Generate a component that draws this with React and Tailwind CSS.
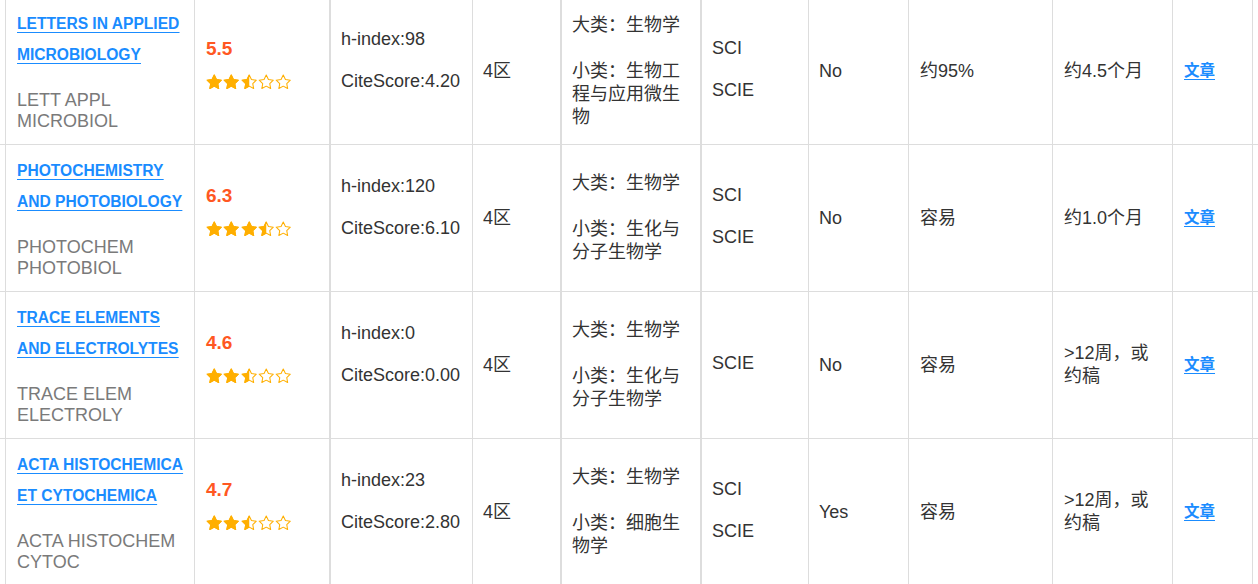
import { useId } from 'react';

const journals = [
  {
    title: ['LETTERS IN APPLIED', 'MICROBIOLOGY'],
    abbr: ['LETT APPL', 'MICROBIOL'],
    score: '5.5',
    stars: 2.5,
    hIndex: 98,
    citeScore: '4.20',
    zone: '4区',
    major: '大类：生物学',
    minor: ['小类：生物工', '程与应用微生', '物'],
    index: ['SCI', 'SCIE'],
    oa: 'No',
    rate: ['约95%'],
    speed: ['约4.5个月']
  },
  {
    title: ['PHOTOCHEMISTRY', 'AND PHOTOBIOLOGY'],
    abbr: ['PHOTOCHEM', 'PHOTOBIOL'],
    score: '6.3',
    stars: 3.5,
    hIndex: 120,
    citeScore: '6.10',
    zone: '4区',
    major: '大类：生物学',
    minor: ['小类：生化与', '分子生物学'],
    index: ['SCI', 'SCIE'],
    oa: 'No',
    rate: ['容易'],
    speed: ['约1.0个月']
  },
  {
    title: ['TRACE ELEMENTS', 'AND ELECTROLYTES'],
    abbr: ['TRACE ELEM', 'ELECTROLY'],
    score: '4.6',
    stars: 2.5,
    hIndex: 0,
    citeScore: '0.00',
    zone: '4区',
    major: '大类：生物学',
    minor: ['小类：生化与', '分子生物学'],
    index: ['SCIE'],
    oa: 'No',
    rate: ['容易'],
    speed: ['>12周，或', '约稿']
  },
  {
    title: ['ACTA HISTOCHEMICA', 'ET CYTOCHEMICA'],
    abbr: ['ACTA HISTOCHEM', 'CYTOC'],
    score: '4.7',
    stars: 2.5,
    hIndex: 23,
    citeScore: '2.80',
    zone: '4区',
    major: '大类：生物学',
    minor: ['小类：细胞生', '物学'],
    index: ['SCI', 'SCIE'],
    oa: 'Yes',
    rate: ['容易'],
    speed: ['>12周，或', '约稿']
  }
];

const STAR = 'M12 1.5l3.2 6.6 7.1.9-5.2 5 1.3 7.2L12 17.7l-6.4 3.5 1.3-7.2-5.2-5 7.1-.9z';

function Star({ fill }) {
  const id = useId();
  return (
    <svg viewBox="0 0 24 24" className="w-[16.5px] h-[16.5px] shrink-0">
      <defs>
        <clipPath id={id}>
          <rect x="0" y="0" width={fill === 'half' ? 12 : 24} height="24" />
        </clipPath>
      </defs>
      <path d={STAR} fill="none" stroke="#ffaf00" strokeWidth="1.5" strokeLinejoin="round" />
      {fill !== 'empty' ? <path d={STAR} fill="#ffaf00" stroke="#ffaf00" strokeWidth="1.5" strokeLinejoin="round" clipPath={`url(#${id})`} /> : null}
    </svg>
  );
}

function Stars({ value }) {
  const list = [0, 1, 2, 3, 4].map((i) => (value >= i + 1 ? 'full' : value > i ? 'half' : 'empty'));
  return (
    <div className="flex gap-[0.8px] h-[16.5px]">
      {list.map((f, i) => (
        <Star key={i} fill={f} />
      ))}
    </div>
  );
}

function Lines({ lines }) {
  return lines.map((l, i) => (
    <span key={i} className="block whitespace-nowrap">
      {l}
    </span>
  ));
}

function Row({ j }) {
  return (
    <div className="flex h-[147px] border-b border-[#dddddd]">
      <div className="w-[5px] shrink-0" />
      <div className="w-[189px] shrink-0 border-l border-[#dddddd] px-[11px] pb-[3px] flex flex-col justify-center">
        <a href="#" className="block text-[15.6px] font-bold leading-[31px] text-[#1a8cff] underline underline-offset-[3px]">
          {j.title.map((t, i) => (
            <span key={i} className="block whitespace-nowrap">
              <span className="underline">{t}</span>
            </span>
          ))}
        </a>
        <div className="mt-[20px] text-[18px] leading-[21px] text-[#7a7a7a]">
          <Lines lines={j.abbr} />
        </div>
      </div>
      <div className="w-[135px] shrink-0 border-l border-[#dddddd] px-[11px] pb-[16px] flex flex-col justify-center">
        <div className="text-[19px] font-bold leading-[28px] text-[#ff5722]">{j.score}</div>
        <div className="mt-[11px]">
          <Stars value={j.stars} />
        </div>
      </div>
      <div className="w-[143px] shrink-0 border-l-2 border-[#dddddd] px-[10px] pb-[23px] flex flex-col justify-center leading-[24px]">
        <p className="mb-[18px] whitespace-nowrap">h-index:{j.hIndex}</p>
        <p className="whitespace-nowrap">CiteScore:{j.citeScore}</p>
      </div>
      <div className="w-[88px] shrink-0 border-l border-[#dddddd] px-[10px] flex items-center">{j.zone}</div>
      <div className="w-[140px] shrink-0 border-l-2 border-[#dddddd] px-[10px] flex flex-col justify-center leading-[23px]">
        <p className="mb-[23px] whitespace-nowrap">{j.major}</p>
        <div>
          <Lines lines={j.minor} />
        </div>
      </div>
      <div className="w-[108px] shrink-0 border-l-2 border-[#dddddd] px-[10px] pb-[4px] flex flex-col justify-center gap-[19px] leading-[23px]">
        {j.index.map((s) => (
          <p key={s}>{s}</p>
        ))}
      </div>
      <div className="w-[100px] shrink-0 border-l border-[#dddddd] px-[10px] flex items-center">{j.oa}</div>
      <div className="w-[144px] shrink-0 border-l border-[#dddddd] px-[11px] flex flex-col justify-center leading-[23px]">
        <Lines lines={j.rate} />
      </div>
      <div className="w-[120px] shrink-0 border-l border-[#dddddd] px-[11px] flex flex-col justify-center leading-[23px]">
        <Lines lines={j.speed} />
      </div>
      <div className="w-[80px] shrink-0 border-l border-[#dddddd] px-[11px] flex items-center">
        <a href="#" className="text-[15.5px] font-bold text-[#1a8cff] underline underline-offset-[3px]">
          文章
        </a>
      </div>
      <div className="flex-1 border-l border-[#dddddd]" />
    </div>
  );
}

export default function App() {
  return (
    <div className="w-[1258px] h-[584px] overflow-hidden bg-white font-['Liberation_Sans','Noto_Sans_CJK_SC',sans-serif] text-[18px] text-[#333333]">
      <div className="-mt-[2px]">
        {journals.map((j) => (
          <Row key={j.abbr.join(' ')} j={j} />
        ))}
      </div>
    </div>
  );
}
